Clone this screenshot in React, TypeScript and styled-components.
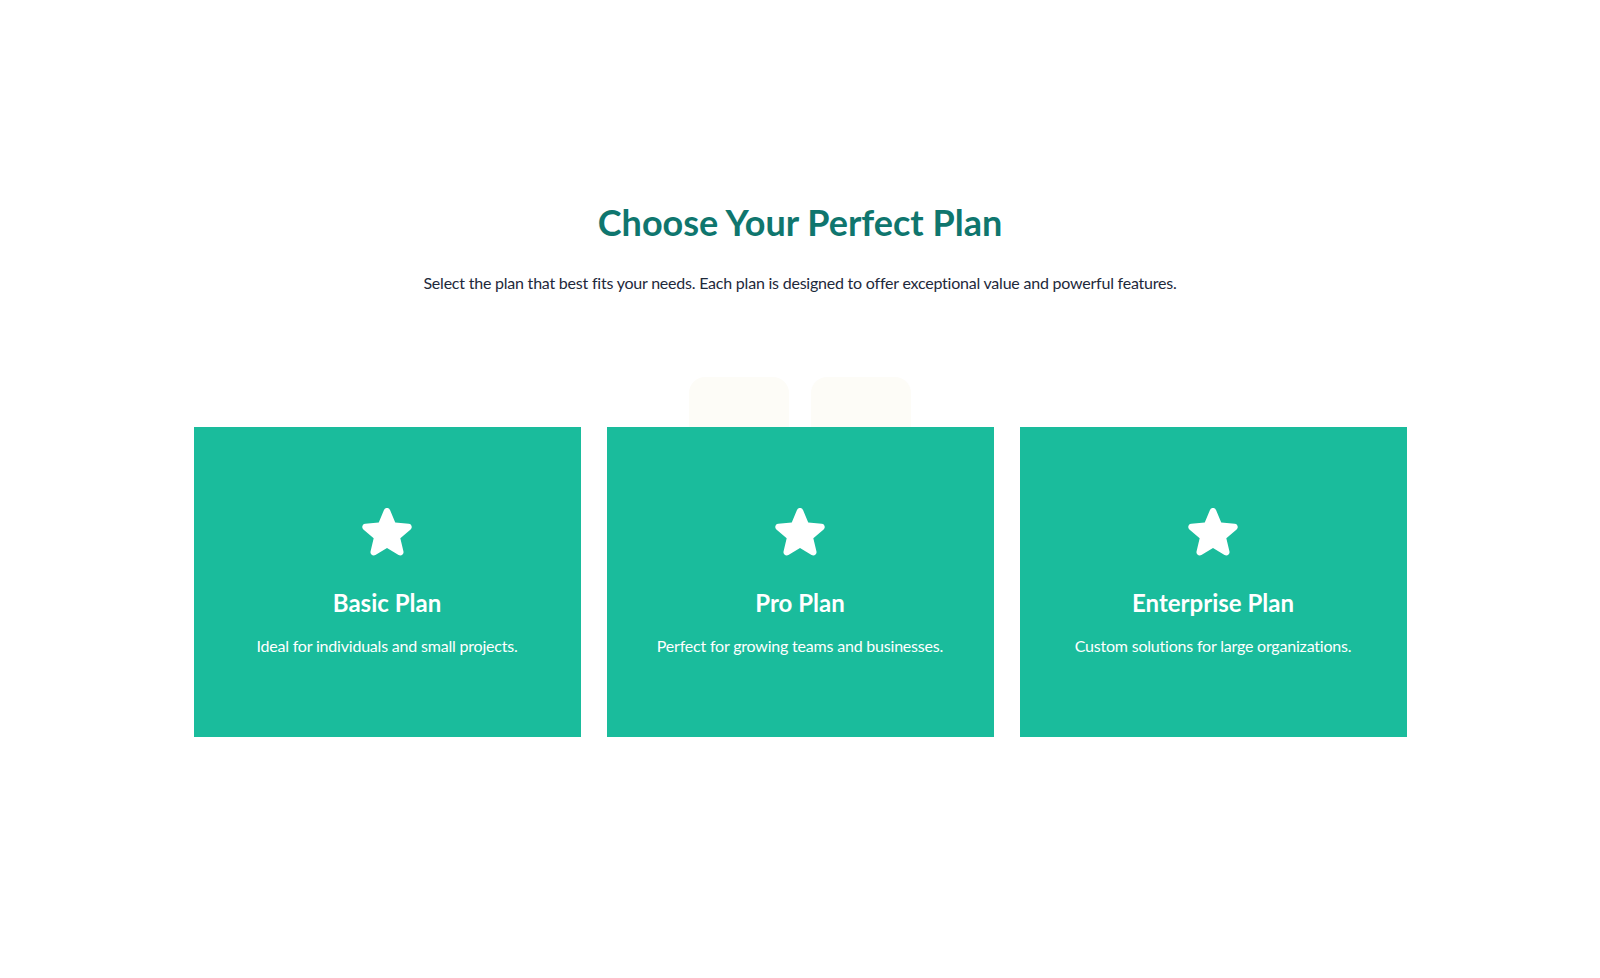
import React from 'react'
import styled, { createGlobalStyle } from 'styled-components'

const GlobalStyle = createGlobalStyle`
  body {
    margin: 0;
    background: #ffffff;
    font-family: Lato, "Noto Sans", sans-serif;
  }
`

const Section = styled.section`
  padding: 201px 32px 0;
  display: flex;
  flex-direction: column;
  align-items: center;
`

const Title = styled.h2`
  margin: 0;
  font-size: 36px;
  line-height: 1.2;
  font-weight: 700;
  color: #0f766e;
`

const Subtitle = styled.p`
  margin: 27px 0 0;
  font-size: 16px;
  line-height: 24px;
  letter-spacing: -0.22px;
  color: #1e293b;
`

const Tabs = styled.div`
  margin-top: 82px;
  display: flex;
  gap: 22px;
`

const Tab = styled.div`
  width: 100px;
  height: 50px;
  border-radius: 16px 16px 0 0;
  background: #fdfcf7;
`

const Grid = styled.div`
  width: 100%;
  max-width: 1213px;
  display: grid;
  grid-template-columns: repeat(3, 1fr);
  gap: 26px;
`

const Card = styled.div`
  height: 310px;
  box-sizing: border-box;
  padding-top: 75px;
  background: #1abc9c;
  color: #ffffff;
  display: flex;
  flex-direction: column;
  align-items: center;
  text-align: center;
`

const CardTitle = styled.h3`
  margin: 25px 0 0;
  font-size: 24px;
  line-height: 32px;
  font-weight: 700;
`

const CardText = styled.p`
  margin: 15px 0 0;
  font-size: 16px;
  line-height: 24px;
  letter-spacing: -0.2px;
`

const Star = () => (
  <svg width="60" height="60" viewBox="0 0 24 24" fill="#ffffff">
    <path
      fillRule="evenodd"
      d="M10.788 3.21c.448-1.077 1.976-1.077 2.424 0l2.082 5.006 5.404.434c1.164.093 1.636 1.545.749 2.305l-4.117 3.527 1.257 5.273c.271 1.136-.964 2.033-1.96 1.425L12 18.354 7.373 21.18c-.996.608-2.231-.29-1.96-1.425l1.257-5.273-4.117-3.527c-.887-.76-.415-2.212.749-2.305l5.404-.434 2.082-5.005Z"
    />
  </svg>
)

const plans = [
  { name: 'Basic Plan', text: 'Ideal for individuals and small projects.' },
  { name: 'Pro Plan', text: 'Perfect for growing teams and businesses.' },
  { name: 'Enterprise Plan', text: 'Custom solutions for large organizations.' },
]

export default function App() {
  return (
    <>
      <GlobalStyle />
      <Section>
        <Title>Choose Your Perfect Plan</Title>
        <Subtitle>
          Select the plan that best fits your needs. Each plan is designed to offer exceptional value and powerful
          features.
        </Subtitle>
        <Tabs>
          <Tab />
          <Tab />
        </Tabs>
        <Grid>
          {plans.map(({ name, text }) => (
            <Card key={name}>
              <Star />
              <CardTitle>{name}</CardTitle>
              <CardText>{text}</CardText>
            </Card>
          ))}
        </Grid>
      </Section>
    </>
  )
}
